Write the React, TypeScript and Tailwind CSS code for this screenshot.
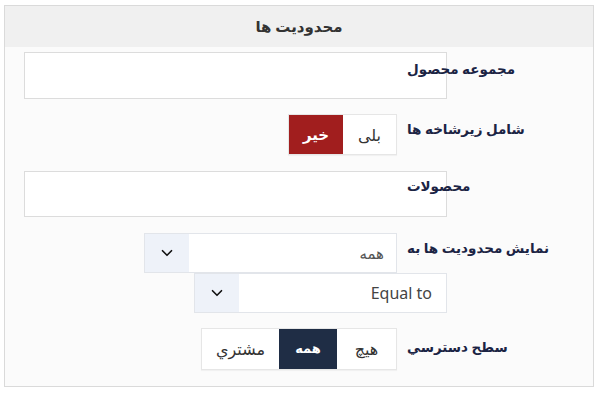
import { ChevronDown } from 'lucide-react';

const font = { fontFamily: '"Noto Sans", "DejaVu Sans", sans-serif' };

function Label({ text, className = '' }: { text: string; className?: string }) {
    return (
        <div dir="rtl" className={`relative text-[13.5px] font-bold leading-5 text-[#1b2444] whitespace-nowrap ${className}`}>
            {text}
        </div>
    );
}

export default function App() {
    return (
        <div className="w-[600px] h-[396px] bg-white pt-[5px] pl-[4px]" style={font}>
            <div className="w-[590px] h-[382px] border border-[#dadada] bg-[#fbfbfb]">
                {/* Header */}
                <div className="h-[41px] bg-[#f0f0f0] flex items-center justify-center">
                    <span dir="rtl" className="text-[15px] font-bold text-[#333]">محدودیت ها</span>
                </div>

                {/* Product collection */}
                <div className="flex items-start mt-[5px]">
                    <div className="w-[442px] pl-[19px]">
                        <div className="h-[47px] border border-[#dcdcdc] bg-white" />
                    </div>
                    <Label text="مجموعه محصول" className="ml-[-40px] pt-[7px]" />
                </div>

                {/* Include subcategories */}
                <div className="flex items-start mt-[15px]">
                    <div className="w-[392px] flex justify-end">
                        <div className="flex h-[41px] border border-[#e6e6e6] shadow-[0_1px_1px_rgba(0,0,0,0.04)]">
                            <div className="w-[54px] bg-[#a11e1e] flex items-center justify-center text-white text-[15px] font-bold" dir="rtl">خیر</div>
                            <div className="w-[53px] bg-white flex items-center justify-center text-[#333] text-[16px]" dir="rtl">بلی</div>
                        </div>
                    </div>
                    <Label text="شامل زیرشاخه ها" className="ml-[10px] pt-[5px]" />
                </div>

                {/* Products */}
                <div className="flex items-start mt-[16px]">
                    <div className="w-[442px] pl-[19px]">
                        <div className="h-[46px] border border-[#dcdcdc] bg-white" />
                    </div>
                    <Label text="محصولات" className="ml-[-40px] pt-[5px]" />
                </div>

                {/* Show restrictions to */}
                <div className="flex items-start mt-[16px]">
                    <div className="w-[392px] flex justify-end">
                        <div className="flex w-[253px] h-[40px] border border-[#e2e5ea] bg-white">
                            <div className="w-[44px] bg-[#eef2f9] flex items-center justify-center text-[#111]">
                                <ChevronDown size={18} strokeWidth={2.2} />
                            </div>
                            <div dir="rtl" className="flex-1 flex items-center pr-[12px] text-[15px] text-[#555]">همه</div>
                        </div>
                    </div>
                    <Label text="نمایش محدودیت ها به" className="ml-[10px] pt-[5px]" />
                </div>

                {/* Operator */}
                <div className="flex">
                    <div className="w-[442px] flex justify-end">
                        <div className="flex w-[253px] h-[40px] border border-[#e2e5ea] bg-white">
                            <div className="w-[44px] bg-[#eef2f9] flex items-center justify-center text-[#111]">
                                <ChevronDown size={18} strokeWidth={2.2} />
                            </div>
                            <div className="flex-1 flex items-center justify-end pr-[14px] text-[16px] text-[#444]">Equal to</div>
                        </div>
                    </div>
                </div>

                {/* Access level */}
                <div className="flex items-start mt-[15px]">
                    <div className="w-[392px] flex justify-end">
                        <div className="flex h-[42px] border border-[#e6e6e6] shadow-[0_1px_1px_rgba(0,0,0,0.04)]">
                            <div dir="rtl" className="w-[77px] bg-white flex items-center justify-center text-[#333] text-[16px]">مشتري</div>
                            <div dir="rtl" className="w-[58px] bg-[#1f2d45] flex items-center justify-center text-white text-[13px] font-bold">همه</div>
                            <div dir="rtl" className="w-[59px] bg-white flex items-center justify-center text-[#333] text-[16px]">هیچ</div>
                        </div>
                    </div>
                    <Label text="سطح دسترسي" className="ml-[10px] pt-[9px]" />
                </div>
            </div>
        </div>
    );
}
